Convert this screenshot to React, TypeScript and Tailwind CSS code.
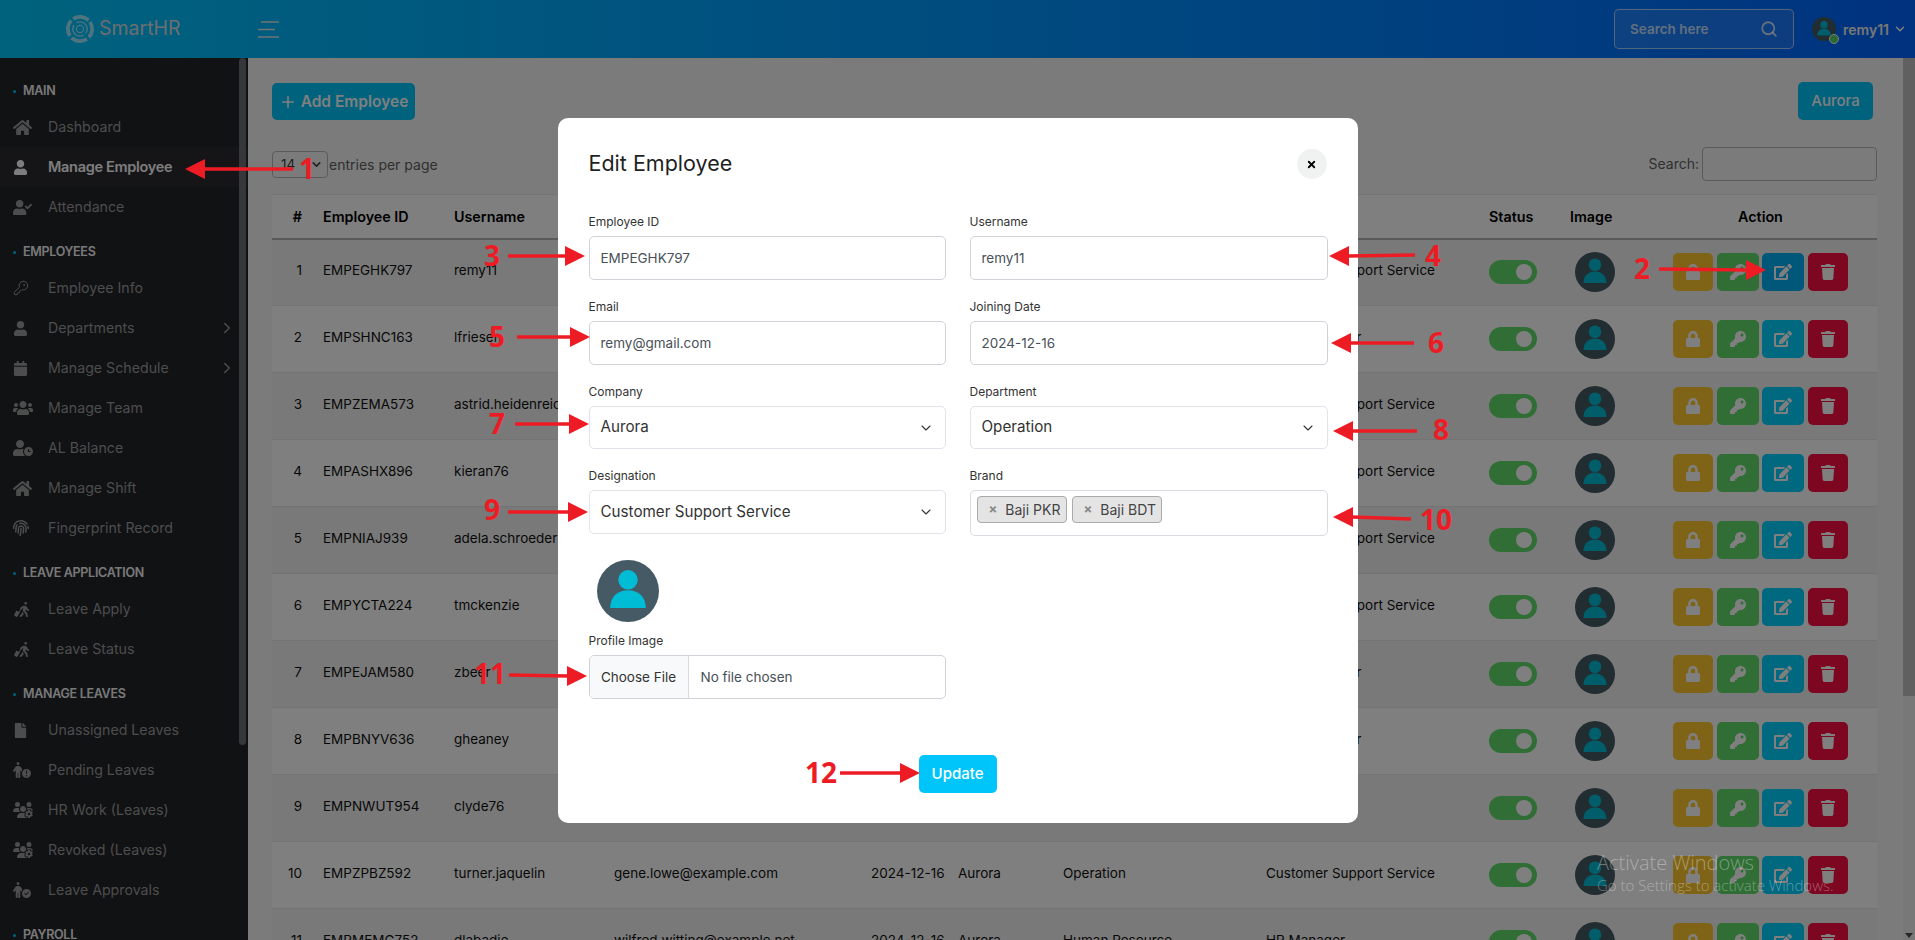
import React from "react";
import { KeyRound, Search, ChevronDown, ChevronRight, Plus, X } from "lucide-react";
import {
  FaHome, FaUser, FaUserCheck, FaCalendar, FaUsers, FaUserClock, FaFingerprint, FaFile,
  FaLock, FaKey, FaTrash, FaEdit,
} from "react-icons/fa";
import {
  FaPersonWalkingLuggage, FaPersonCircleExclamation, FaPersonCircleCheck, FaUsersGear,
} from "react-icons/fa6";

type NavItem = { label: string; icon: React.ReactNode; active?: boolean; arrow?: boolean };
type NavSection = { title: string; items: NavItem[] };

const nav: NavSection[] = [
  {
    title: "MAIN",
    items: [
      { label: "Dashboard", icon: <FaHome size={19} /> },
      { label: "Manage Employee", icon: <FaUser size={15} />, active: true },
      { label: "Attendance", icon: <FaUserCheck size={19} /> },
    ],
  },
  {
    title: "EMPLOYEES",
    items: [
      { label: "Employee Info", icon: <KeyRound size={16} strokeWidth={1.5} /> },
      { label: "Departments", icon: <FaUser size={15} />, arrow: true },
      { label: "Manage Schedule", icon: <FaCalendar size={15} />, arrow: true },
      { label: "Manage Team", icon: <FaUsers size={20} /> },
      { label: "AL Balance", icon: <FaUserClock size={20} /> },
      { label: "Manage Shift", icon: <FaHome size={19} /> },
      { label: "Fingerprint Record", icon: <FaFingerprint size={16} /> },
    ],
  },
  {
    title: "LEAVE APPLICATION",
    items: [
      { label: "Leave Apply", icon: <FaPersonWalkingLuggage size={17} /> },
      { label: "Leave Status", icon: <FaPersonWalkingLuggage size={17} /> },
    ],
  },
  {
    title: "MANAGE LEAVES",
    items: [
      { label: "Unassigned Leaves", icon: <FaFile size={15} /> },
      { label: "Pending Leaves", icon: <FaPersonCircleExclamation size={18} /> },
      { label: "HR Work (Leaves)", icon: <FaUsersGear size={20} /> },
      { label: "Revoked (Leaves)", icon: <FaUsersGear size={20} /> },
      { label: "Leave Approvals", icon: <FaPersonCircleCheck size={18} /> },
    ],
  },
  { title: "PAYROLL", items: [] },
];

const rows = [
  ["EMPEGHK797", "remy11", "remy@gmail.com", "Aurora", "Operation", "Customer Support Service"],
  ["EMPSHNC163", "lfriesen", "lfriesen@example.org", "Aurora", "Operation", "Team Manager"],
  ["EMPZEMA573", "astrid.heidenreich", "astrid@example.com", "Aurora", "Operation", "Customer Support Service"],
  ["EMPASHX896", "kieran76", "kieran76@example.net", "Aurora", "Operation", "Customer Support Service"],
  ["EMPNIAJ939", "adela.schroeder", "adela@example.org", "Aurora", "Operation", "Customer Support Service"],
  ["EMPYCTA224", "tmckenzie", "tmckenzie@example.com", "Aurora", "Operation", "Customer Support Service"],
  ["EMPEJAM580", "zbeer", "zbeer@example.net", "Aurora", "Operation", "Team Manager"],
  ["EMPBNYV636", "gheaney", "gheaney@example.org", "Aurora", "Operation", "Team Manager"],
  ["EMPNWUT954", "clyde76", "clyde76@example.com", "Aurora", "Operation", "HR"],
  ["EMPZPBZ592", "turner.jaquelin", "gene.lowe@example.com", "Aurora", "Operation", "Customer Support Service"],
  ["EMPMEMG752", "dlabadie", "wilfred.witting@example.net", "Aurora", "Human Resource", "HR Manager"],
];

function Avatar({ className = "w-[40px] h-[40px]" }: { className?: string }) {
  return (
    <svg viewBox="0 0 40 40" className={"block " + className}>
      <circle cx="20" cy="20" r="20" fill="#455a64" />
      <circle cx="20" cy="12.8" r="6.3" fill="#00bcd4" />
      <path d="M8.5 31c0-7.5 5-11.500 11.500-11.500S31.500 23.500 31.500 31z" fill="#00bcd4" />
    </svg>
  );
}

function Logo() {
  return (
    <svg viewBox="0 0 32 32" className="w-[30px] h-[30px] shrink-0" fill="none" stroke="#ffffff" strokeOpacity="0.62">
      <circle cx="16" cy="16" r="13" strokeWidth="4" strokeDasharray="17.500 2.900" transform="rotate(-35 16 16)" />
      <circle cx="16" cy="16" r="7.600" strokeWidth="1.500" strokeDasharray="20 3.900" transform="rotate(60 16 16)" />
      <circle cx="16" cy="16" r="3.800" strokeWidth="1.300" />
    </svg>
  );
}

function Sidebar() {
  return (
    <aside className="relative w-[248px] shrink-0 h-full bg-[#222428] overflow-hidden pt-[24px]">
      {nav.map((s, i) => (
        <div key={s.title} className={i > 0 ? "mt-[16px]" : ""}>
          <div className="h-[18px] flex items-center pl-[13px] text-[12.5px] leading-none font-semibold tracking-[-0.3px] text-[#f2f2f2]">
            <span className="w-[3px] h-[3px] rounded-full bg-[#00c5fb] mr-[7px]" />
            {s.title}
          </div>
          <div className="mt-[7px]">
            {s.items.map((it) => (
              <div
                key={it.label}
                className={
                  "h-[40px] flex items-center pr-[12px] " +
                  (it.active ? "bg-[#2a2b30] text-[14.5px] text-[#fafafa] font-semibold tracking-[-0.3px]" : "text-[14.2px] text-[#9a9a9c]")
                }
              >
                <span className="w-[48px] pl-[13px] shrink-0 flex items-center">{it.icon}</span>
                <span className="flex-1">{it.label}</span>
                {it.arrow && <ChevronRight size={18} strokeWidth={2} />}
              </div>
            ))}
          </div>
        </div>
      ))}
      <div className="absolute right-[2px] top-0 w-[7px] h-[687px] rounded-[4px] bg-[#6c6e74]" />
    </aside>
  );
}

function Header() {
  return (
    <header className="h-[58px] shrink-0 flex items-center bg-gradient-to-r from-[#00c5fb] to-[#0264ff] text-white">
      <div className="w-[65px]" />
      <Logo />
      <span className="ml-[4px] w-[159px] text-[19.5px] font-normal text-[#d9dde0]">SmartHR</span>
      <svg viewBox="0 0 21 17" className="w-[21px] h-[17px]" stroke="#e2e6e8" strokeWidth="1.500">
        <path d="M3 1h18M0 8.500h17M0 16h21" />
      </svg>
      <div className="flex-1" />
      <div className="w-[180px] h-[40px] flex items-center justify-between px-[15px] rounded-[5px] border border-white/60 bg-white/10 text-[13.5px] font-semibold text-[#ffffff]/75">
        <span>Search here</span>
        <Search size={18} strokeWidth={2.4} />
      </div>
      <div className="ml-[18px] relative w-[24px] h-[24px]">
        <Avatar className="w-[24px] h-[24px]" />
        <span className="absolute right-[-3px] bottom-[-3px] w-[10px] h-[10px] rounded-full bg-[#55ce63] border border-white" />
      </div>
      <span className="ml-[7px] w-[45px] text-[14px] font-semibold text-[#eeeeee] whitespace-nowrap">remy11</span>
      <ChevronDown size={14} className="ml-[5px] mr-[8px]" strokeWidth={2.5} />
    </header>
  );
}

function ActionButtons({ hover }: { hover?: boolean }) {
  return (
    <div className="flex text-white text-[16px]">
      <span className="w-[40px] h-[38px] rounded-[5px] bg-[#ffc82e] flex items-center justify-center"><FaLock /></span>
      <span className="ml-[4px] w-[42px] h-[38px] rounded-[5px] bg-[#60dc6c] flex items-center justify-center"><FaKey /></span>
      <span className={"ml-[3px] w-[42px] h-[38px] rounded-[5px] flex items-center justify-center " + (hover ? "bg-[#00aef2]" : "bg-[#00d0ff]")}><FaEdit size={18} /></span>
      <span className="ml-[4px] w-[40px] h-[38px] rounded-[5px] bg-[#fb0c40] flex items-center justify-center"><FaTrash /></span>
    </div>
  );
}

function Toggle() {
  return (
    <div className="w-[48px] h-[24px] rounded-full bg-[#60dc6c] flex items-center justify-end pr-[5px]">
      <span className="w-[16px] h-[16px] rounded-full bg-white" />
    </div>
  );
}

function EmployeeTable() {
  const th = "text-left font-semibold text-[14.3px] p-0";
  const td = "p-0 pb-[4px] align-middle";
  return (
    <table className="w-[1605px] table-fixed border-collapse text-[13.5px] text-[#111111]">
      <colgroup>
        <col className="w-[51px]" />
        <col className="w-[131px]" />
        <col className="w-[160px]" />
        <col className="w-[257px]" />
        <col className="w-[87px]" />
        <col className="w-[105px]" />
        <col className="w-[203px]" />
        <col className="w-[223px]" />
        <col className="w-[81px]" />
        <col className="w-[103px]" />
        <col className="w-[204px]" />
      </colgroup>
      <thead>
        <tr className="h-[44px] bg-white border-t border-[#e8e8e8] border-b-2 border-b-[#b4b4b4] text-black">
          <th className={th + " text-right pr-[21px]"}>#</th>
          <th className={th}>Employee ID</th>
          <th className={th}>Username</th>
          <th className={th}>Email</th>
          <th className={th}>Joining Date</th>
          <th className={th}>Company</th>
          <th className={th}>Department</th>
          <th className={th}>Designation</th>
          <th className={th}>Status</th>
          <th className={th}>Image</th>
          <th className={th + " !text-center pr-[29px]"}>Action</th>
        </tr>
      </thead>
      <tbody>
        {rows.map((r, i) => (
          <tr key={r[0]} className={"h-[67px] border-b border-[#e6e6e6] " + (i % 2 === 0 ? "bg-[#f2f2f2]" : "bg-white")}>
            <td className={td + " text-right pr-[21px]"}>{i + 1}</td>
            <td className={td}>{r[0]}</td>
            <td className={td}>{r[1]}</td>
            <td className={td}>{r[2]}</td>
            <td className={td}>2024-12-16</td>
            <td className={td}>{r[3]}</td>
            <td className={td}>{r[4]}</td>
            <td className={td}>{r[5]}</td>
            <td className="p-0"><Toggle /></td>
            <td className="p-0 pl-[5px]"><Avatar /></td>
            <td className="p-0"><ActionButtons hover={i === 0} /></td>
          </tr>
        ))}
      </tbody>
    </table>
  );
}

const inputCls = "h-[44px] rounded-[5px] border border-[#cfd3d8] flex items-center px-[11px] text-[13.5px] text-[#495057]";
const labelCls = "block h-[14px] leading-[14px] mb-[7px] text-[12px] text-[#333333]";

function Field({ label, children }: { label: string; children: React.ReactNode }) {
  return (
    <div>
      <label className={labelCls}>{label}</label>
      {children}
    </div>
  );
}

function Sel({ value, short }: { value: string; short?: boolean }) {
  return (
    <div className={(short ? "h-[43px]" : "h-[44px]") + " rounded-[5px] border border-[#e0e3ea] flex items-center justify-between px-[11px] text-[15.2px] text-[#333333]"}>
      <span>{value}</span>
      <ChevronDown size={16} strokeWidth={1.6} className="text-[#333333]" />
    </div>
  );
}

function Tag({ text }: { text: string }) {
  return (
    <span className="w-[90px] h-[27px] rounded-[4px] border border-[#aaaaaa] bg-[#e4e4e4] flex items-center pl-[11px] text-[14px] text-[#444444] whitespace-nowrap">
      <span className="text-[#888888] font-bold text-[13px] mr-[8px]">×</span>
      {text}
    </span>
  );
}

function Modal() {
  return (
    <div className="w-[800px] h-[705px] rounded-[10px] bg-white px-[31px] pt-[31px]">
      <div className="flex items-center justify-between h-[30px]">
        <h2 className="text-[21.5px] font-normal text-[#1f1f1f] leading-none">Edit Employee</h2>
        <span className="w-[30px] h-[30px] rounded-full bg-[#f0f2f2] flex items-center justify-center">
          <X size={11} strokeWidth={4} className="text-black" />
        </span>
      </div>
      <div className="grid grid-cols-[357px_358px] gap-x-[24px] gap-y-[20px] mt-[36px]">
        <Field label="Employee ID"><div className={inputCls}>EMPEGHK797</div></Field>
        <Field label="Username"><div className={inputCls}>remy11</div></Field>
        <Field label="Email"><div className={inputCls}>remy@gmail.com</div></Field>
        <Field label="Joining Date"><div className={inputCls}>2024-12-16</div></Field>
        <Field label="Company"><Sel value="Aurora" short /></Field>
        <Field label="Department"><Sel value="Operation" short /></Field>
        <Field label="Designation"><Sel value="Customer Support Service" /></Field>
        <Field label="Brand">
          <div className="h-[46px] rounded-[5px] border border-[#d8dbe0] flex items-start gap-[5px] pl-[6px] pt-[5px]">
            <Tag text="Baji PKR" />
            <Tag text="Baji BDT" />
          </div>
        </Field>
      </div>
      <div className="mt-[24px] ml-[8px]"><Avatar className="w-[62px] h-[62px]" /></div>
      <div className="mt-[12px] w-[357px]">
        <label className={labelCls}>Profile Image</label>
        <div className="h-[44px] rounded-[5px] border border-[#cfd3d8] flex items-center text-[13.5px] overflow-hidden">
          <span className="h-full w-[99px] shrink-0 bg-[#f8f9fa] border-r border-[#d8dbe0] flex items-center justify-center text-[#333333]">Choose File</span>
          <span className="pl-[12px] text-[#495057]">No file chosen</span>
        </div>
      </div>
      <div className="mt-[56px] flex justify-center">
        <button className="w-[78px] h-[38px] rounded-[5px] bg-[#00c5fb] text-white text-[15px] font-medium">Update</button>
      </div>
    </div>
  );
}

type Mark = { x1: number; x2: number; y1: number; y2: number; n: string; nx: number; ny: number };
const marks: Mark[] = [
  { x1: 293, y1: 169, x2: 185, y2: 169, n: "1", nx: 307, ny: 179 },
  { x1: 1659, y1: 269, x2: 1766, y2: 270, n: "2", nx: 1642, ny: 279 },
  { x1: 508, y1: 256, x2: 585, y2: 256, n: "3", nx: 492, ny: 266 },
  { x1: 1415, y1: 255, x2: 1329, y2: 256, n: "4", nx: 1433, ny: 266 },
  { x1: 517, y1: 337, x2: 590, y2: 337, n: "5", nx: 497, ny: 347 },
  { x1: 1414, y1: 343, x2: 1331, y2: 343, n: "6", nx: 1436, ny: 353 },
  { x1: 515, y1: 424, x2: 589, y2: 424, n: "7", nx: 497, ny: 434 },
  { x1: 1417, y1: 431, x2: 1333, y2: 431, n: "8", nx: 1441, ny: 440 },
  { x1: 508, y1: 512, x2: 588, y2: 512, n: "9", nx: 492, ny: 520 },
  { x1: 1411, y1: 519, x2: 1333, y2: 517, n: "10", nx: 1436, ny: 530 },
  { x1: 509, y1: 675, x2: 587, y2: 676, n: "11", nx: 490, ny: 684 },
  { x1: 840, y1: 773, x2: 920, y2: 773, n: "12", nx: 821, ny: 783 },
];

function Annotations() {
  return (
    <svg className="absolute inset-0 w-[1915px] h-[940px] pointer-events-none" viewBox="0 0 1915 940">
      {marks.map((m) => {
        const d = m.x2 > m.x1 ? 1 : -1;
        return (
          <g key={m.n}>
            <line x1={m.x1} y1={m.y1} x2={m.x2 - d * 19} y2={m.y2} stroke="#ed1c24" strokeWidth="3.500" />
            <polygon
              points={`${m.x2},${m.y2} ${m.x2 - d * 20},${m.y2 - 10} ${m.x2 - d * 20},${m.y2 + 10}`}
              fill="#ed1c24"
            />
            <text x={m.nx} y={m.ny} textAnchor="middle" fill="#ed1c24" fontSize="28" fontWeight="700" fontFamily="'Open Sans', sans-serif">
              {m.n}
            </text>
          </g>
        );
      })}
    </svg>
  );
}

export default function App() {
  return (
    <div className="relative w-[1915px] h-[940px] overflow-hidden flex flex-col bg-[#f7f7f7] font-['Inter',sans-serif]">
      <Header />
      <div className="flex-1 min-h-0 flex">
        <Sidebar />
        <main className="flex-1 min-w-0 pl-[24px] pt-[24px]">
          <div className="flex items-start justify-between w-[1601px]">
            <button className="w-[143px] h-[37px] mt-[1px] rounded-[5px] bg-[#00c5fb] text-white text-[15.5px] font-semibold flex items-center justify-center gap-[4px]">
              <Plus size={18} strokeWidth={2.2} />Add Employee
            </button>
            <button className="w-[75px] h-[38px] rounded-[5px] bg-[#00c5fb] text-white text-[15px] font-medium">Aurora</button>
          </div>
          <div className="flex items-center justify-between w-[1605px] mt-[27px] h-[34px]">
            <div className="flex items-center text-[14px] text-[#5f5f5f]">
              <span className="w-[56px] h-[27px] rounded-[4px] border border-[#b5b5b5] flex items-center justify-between pl-[8px] pr-[4px] text-[13.5px] text-[#444444]">
                14<ChevronDown size={13} strokeWidth={3} />
              </span>
              <span className="ml-[1px]">entries per page</span>
            </div>
            <div className="flex items-center text-[14px] text-[#5f5f5f]">
              <span className="mr-[3px] mb-[2px]">Search:</span>
              <span className="w-[175px] h-[34px] rounded-[4px] border border-[#b5b5b5]" />
            </div>
          </div>
          <div className="mt-[13px]"><EmployeeTable /></div>
        </main>
        <div className="w-[12px] shrink-0 bg-[#f1f1f1]">
          <div className="h-[638px] bg-[#c1c1c1]" />
        </div>
      </div>
      <span className="absolute right-[2px] bottom-[2px] w-0 h-0 border-x-[4px] border-x-transparent border-t-[5px] border-t-[#505050]" />
      <div className="absolute inset-0 bg-black/50 flex justify-center pt-[118px]">
        <Modal />
      </div>
      <div className="absolute left-[1597px] top-[850px] text-white/35 font-['Open_Sans',sans-serif] font-light">
        <div className="text-[20px] leading-[26px]">Activate Windows</div>
        <div className="text-[15px] leading-[20px] mt-[-1px]">Go to Settings to activate Windows.</div>
      </div>
      <Annotations />
    </div>
  );
}
